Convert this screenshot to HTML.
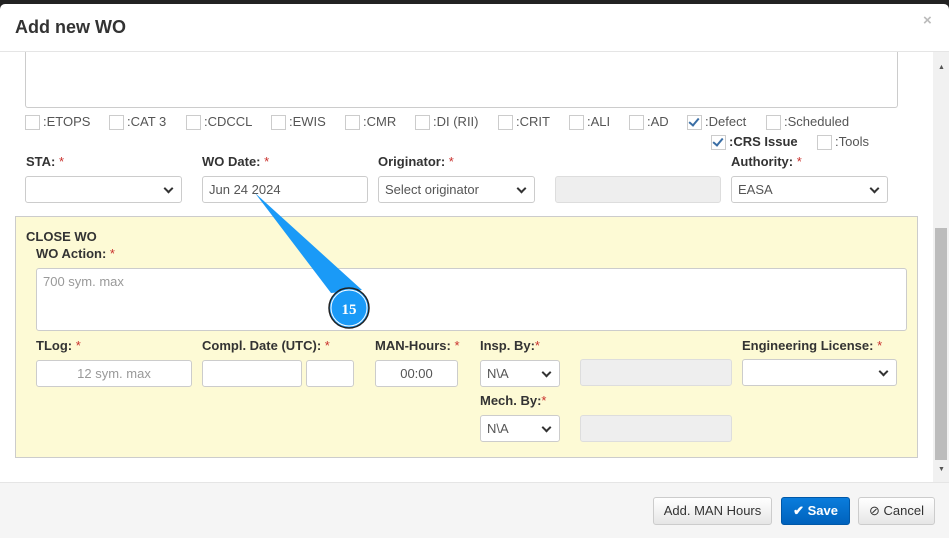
<!DOCTYPE html>
<html><head><style>
*{box-sizing:border-box}
body{margin:0;width:949px;height:538px;overflow:hidden;background:#222;font-family:"Liberation Sans",Arial,sans-serif;font-size:13px;color:#333;position:relative}
.modal{position:absolute;left:0;top:4px;width:949px;height:534px;background:#fff;border-radius:5px 5px 0 0}
.a{position:absolute}
.lbl{position:absolute;font-weight:bold;font-size:13px;color:#333}
.lbl i{color:#c9302c;font-style:normal;font-weight:normal}
.in{position:absolute;border:1px solid #ccc;border-radius:3px;background:#fff;height:27px;font-size:13px;color:#555;padding:6px;line-height:14px}
.dis{background:#eee;border-color:#ddd}
.sel:after{content:"";position:absolute;right:9px;top:8px;width:5px;height:5px;border-right:2px solid #333;border-bottom:2px solid #333;transform:rotate(45deg)}
.cb{position:absolute;font-size:13px;color:#555;padding-left:18px;line-height:14px}
.cb:before{content:"";position:absolute;left:0;top:0;width:13px;height:13px;border:1px solid #ccc;background:#fff}
.ck:after{content:"";position:absolute;left:4px;top:1px;width:4px;height:8px;border-right:2px solid #3a6ea5;border-bottom:2px solid #3a6ea5;transform:rotate(40deg)}
.btn{position:absolute;border:1px solid #ccc;border-radius:3px;background:linear-gradient(#fff,#e6e6e6);height:28px;font-size:13px;color:#333;text-align:center;line-height:26px}
</style></head><body>
<div class="modal">
<div class="a" style="left:15px;top:13px;font-size:18px;font-weight:bold;color:#333">Add new WO</div>
<div class="a" style="left:923px;top:8px;font-size:15px;color:#bbb;font-weight:bold">×</div>
<div class="a" style="left:0;top:47px;width:949px;height:1px;background:#e5e5e5"></div>
<div class="a" style="left:933px;top:48px;width:16px;height:430px;background:#f1f1f1"></div>
<div class="a" style="left:935px;top:224px;width:12px;height:232px;background:#bcbcbc"></div>
<div class="a" style="left:938px;top:60px;font-size:7px;color:#555">▲</div>
<div class="a" style="left:938px;top:462px;font-size:7px;color:#555">▼</div>
<div class="a" style="left:25px;top:48px;width:873px;height:56px;border:1px solid #ccc;border-top:none;border-radius:0 0 3px 3px"></div>
</div>
<div class="cb" style="left:25px;top:115px">:ETOPS</div>
<div class="cb" style="left:109px;top:115px">:CAT 3</div>
<div class="cb" style="left:186px;top:115px">:CDCCL</div>
<div class="cb" style="left:271px;top:115px">:EWIS</div>
<div class="cb" style="left:345px;top:115px">:CMR</div>
<div class="cb" style="left:415px;top:115px">:DI (RII)</div>
<div class="cb" style="left:498px;top:115px">:CRIT</div>
<div class="cb" style="left:569px;top:115px">:ALI</div>
<div class="cb" style="left:629px;top:115px">:AD</div>
<div class="cb ck" style="left:687px;top:115px">:Defect</div>
<div class="cb" style="left:766px;top:115px">:Scheduled</div>
<div class="cb ck" style="left:711px;top:135px;font-weight:bold;color:#333">:CRS Issue</div>
<div class="cb" style="left:817px;top:135px">:Tools</div>
<div class="lbl" style="left:26px;top:154px">STA: <i>*</i></div>
<div class="lbl" style="left:202px;top:154px">WO Date: <i>*</i></div>
<div class="lbl" style="left:378px;top:154px">Originator: <i>*</i></div>
<div class="lbl" style="left:731px;top:154px">Authority: <i>*</i></div>
<div class="in sel" style="left:25px;top:176px;width:157px"></div>
<div class="in" style="left:202px;top:176px;width:166px">Jun 24 2024</div>
<div class="in sel" style="left:378px;top:176px;width:157px">Select originator</div>
<div class="in dis" style="left:555px;top:176px;width:166px"></div>
<div class="in sel" style="left:731px;top:176px;width:157px">EASA</div>
<div class="a" style="left:15px;top:216px;width:903px;height:242px;background:#fdfad5;border:1px solid #ccc"></div>
<div class="lbl" style="left:26px;top:229px">CLOSE WO</div>
<div class="lbl" style="left:36px;top:246px">WO Action: <i>*</i></div>
<div class="in" style="left:36px;top:268px;width:871px;height:63px;color:#999">700 sym. max</div>
<div class="lbl" style="left:36px;top:338px">TLog: <i>*</i></div>
<div class="lbl" style="left:202px;top:338px">Compl. Date (UTC): <i>*</i></div>
<div class="lbl" style="left:375px;top:338px">MAN-Hours: <i>*</i></div>
<div class="lbl" style="left:480px;top:338px">Insp. By:<i>*</i></div>
<div class="lbl" style="left:742px;top:338px">Engineering License: <i>*</i></div>
<div class="in" style="left:36px;top:360px;width:156px;text-align:center;color:#999">12 sym. max</div>
<div class="in" style="left:202px;top:360px;width:100px"></div>
<div class="in" style="left:306px;top:360px;width:48px"></div>
<div class="in" style="left:375px;top:360px;width:83px;text-align:center">00:00</div>
<div class="in sel" style="left:480px;top:360px;width:80px">N\A</div>
<div class="in dis" style="left:580px;top:359px;width:152px"></div>
<div class="in sel" style="left:742px;top:359px;width:155px"></div>
<div class="lbl" style="left:480px;top:393px">Mech. By:<i>*</i></div>
<div class="in sel" style="left:480px;top:415px;width:80px">N\A</div>
<div class="in dis" style="left:580px;top:415px;width:152px"></div>
<div class="a" style="left:0;top:482px;width:949px;height:56px;background:#f5f5f5;border-top:1px solid #e5e5e5"></div>
<div class="btn" style="left:653px;top:497px;width:119px">Add. MAN Hours</div>
<div class="btn" style="left:781px;top:497px;width:69px;background:linear-gradient(#0a7ddc,#0062bd);border-color:#0058a8;color:#fff;font-weight:bold">✔ Save</div>
<div class="btn" style="left:858px;top:497px;width:77px">⊘ Cancel</div>
<svg class="a" style="left:0;top:0" width="949" height="538">
<polygon points="255,193 331,293 362,290" fill="#1a9af7"/>
<circle cx="349" cy="308" r="20" fill="#1a9af7" stroke="#222" stroke-width="1.5"/>
<circle cx="349" cy="308" r="18" fill="none" stroke="#fff" stroke-width="1"/>
<text x="349" y="314" text-anchor="middle" font-family="Liberation Serif,serif" font-weight="bold" font-size="15" fill="#fff">15</text>
</svg>
</body></html>
